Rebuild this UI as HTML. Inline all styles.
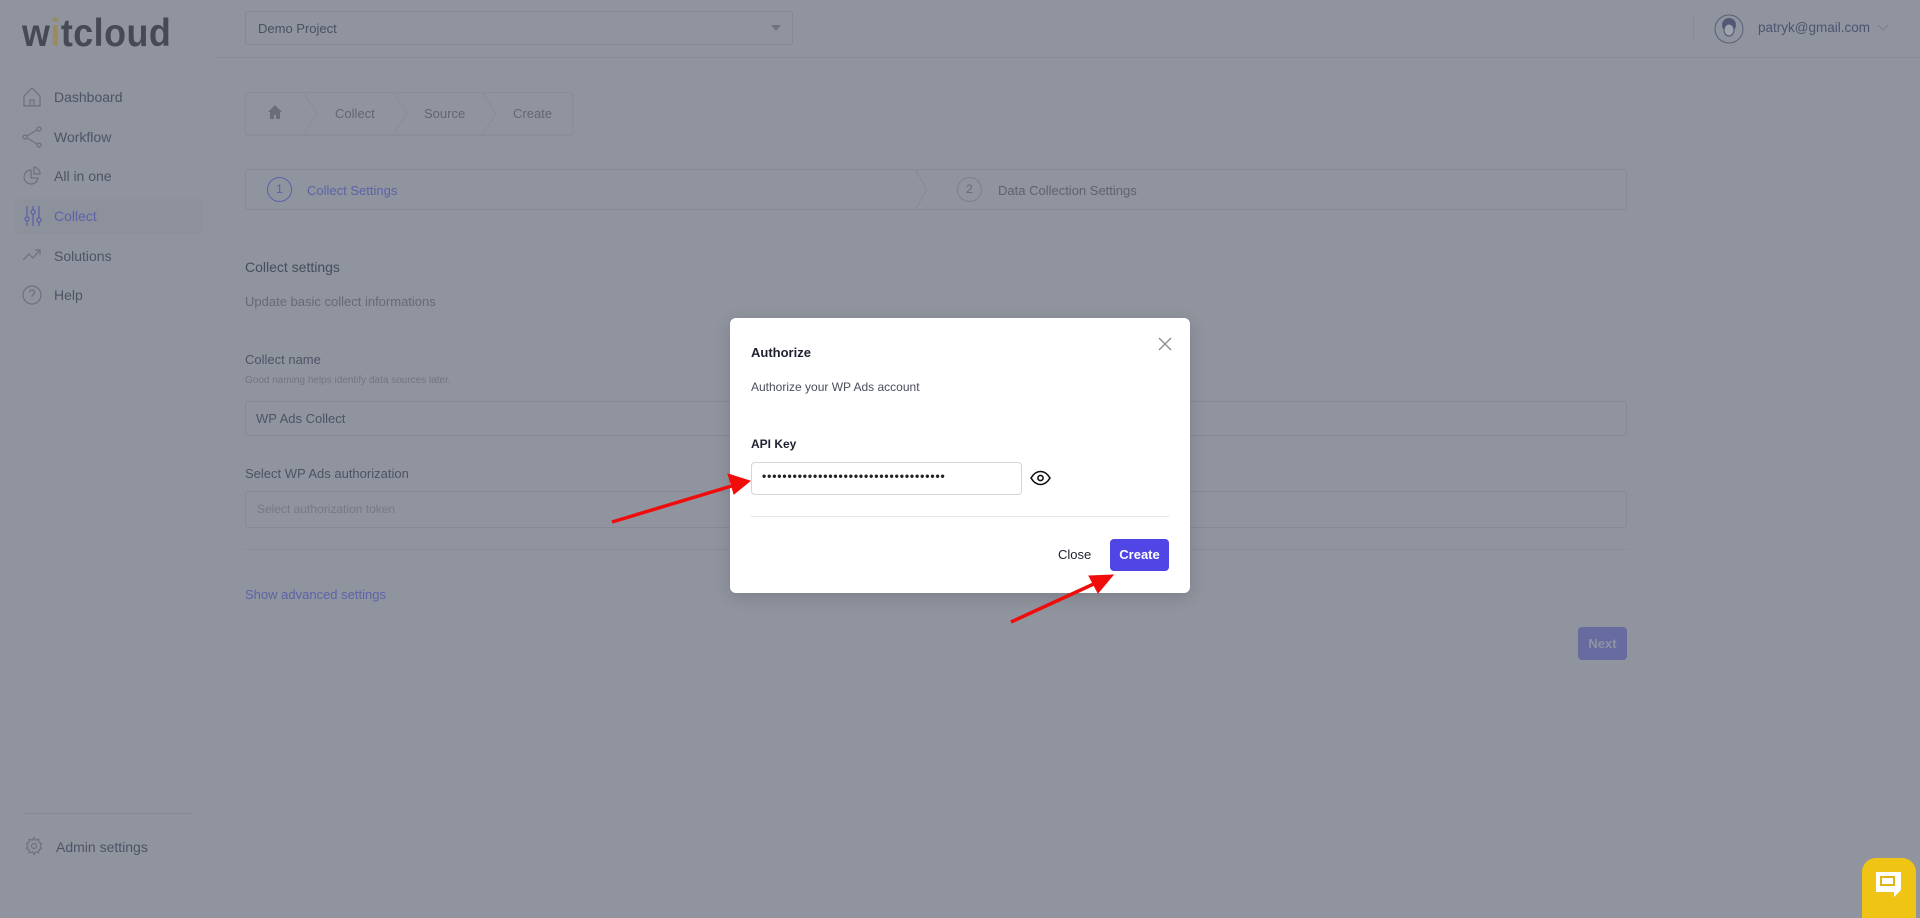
<!DOCTYPE html>
<html><head><meta charset="utf-8"><style>
*{box-sizing:border-box;margin:0;padding:0}
body{width:1920px;height:911px;overflow:hidden;background:#90949e;font-family:"Liberation Sans",sans-serif;position:relative;color:#4b5062}
.a{position:absolute}
.side{font-size:14px;color:#4e5366}
.t{white-space:nowrap}
</style></head><body>
<!-- logo -->
<div class="a t" style="left:22px;top:12px;font-size:39px;font-weight:bold;letter-spacing:0.5px;color:#464a55;transform:scaleX(0.92);transform-origin:left">w<span style="color:#9b8a5e">i</span>tcloud</div>
<!-- project select -->
<div class="a" style="left:245px;top:11px;width:548px;height:34px;border:1px solid #858995;border-radius:3px"></div>
<div class="a t" style="left:258px;top:21px;font-size:13px;color:#4b5062">Demo Project</div>
<div class="a" style="left:771px;top:25px;border-left:5px solid transparent;border-right:5px solid transparent;border-top:6px solid #6e7280"></div>
<div class="a" style="left:215px;top:57px;width:1705px;height:1px;background:#888c97"></div>
<!-- user -->
<div class="a" style="left:1693px;top:14px;width:1px;height:26px;background:#878b96"></div>
<svg class="a" style="left:1714px;top:14px" width="30" height="30" viewBox="0 0 30 30"><circle cx="15" cy="15" r="14" fill="none" stroke="#5a5f78" stroke-width="1"/><circle cx="15" cy="11" r="7" fill="#535875"/><ellipse cx="15" cy="16" rx="5" ry="6" fill="#a0a3ad" stroke="#535875"/></svg>
<div class="a t" style="left:1758px;top:20px;font-size:13.5px;color:#4e5470">patryk@gmail.com</div>
<svg class="a" style="left:1877px;top:24px" width="12" height="8"><path d="M1 1l5 5 5-5" fill="none" stroke="#7a7e8a"/></svg>
<!-- sidebar -->
<svg class="a" style="left:22px;top:86px" width="20" height="22" viewBox="0 0 20 22" fill="none" stroke="#6c7080" stroke-width="1.2"><path d="M2 10L10 2l8 8v10H2z"/><path d="M8 20v-6h4v6"/></svg>
<div class="a t side" style="left:54px;top:89px">Dashboard</div>
<svg class="a" style="left:22px;top:126px" width="20" height="22" fill="none" stroke="#6c7080" stroke-width="1.2"><circle cx="17" cy="3" r="2"/><circle cx="3" cy="11" r="2"/><circle cx="17" cy="19" r="2"/><path d="M5 10l10-6M5 12l10 6"/></svg>
<div class="a t side" style="left:54px;top:129px">Workflow</div>
<svg class="a" style="left:22px;top:165px" width="20" height="22" fill="none" stroke="#6c7080" stroke-width="1.2"><path d="M9 5a7 7 0 1 0 7 8H9z"/><path d="M12 2v7h6a7 7 0 0 0-6-7z"/></svg>
<div class="a t side" style="left:54px;top:168px">All in one</div>
<div class="a" style="left:15px;top:199px;width:187px;height:35px;background:#8d919c;border-radius:3px"></div>
<svg class="a" style="left:24px;top:205px" width="18" height="22" fill="none" stroke="#5d62a8" stroke-width="1.3"><path d="M3 1v20M9 1v20M15 1v20"/><circle cx="3" cy="14" r="2" fill="#90949e"/><circle cx="9" cy="7" r="2" fill="#90949e"/><circle cx="15" cy="15" r="2" fill="#90949e"/></svg>
<div class="a t side" style="left:54px;top:208px;color:#5d62a8">Collect</div>
<svg class="a" style="left:22px;top:245px" width="20" height="20" fill="none" stroke="#6c7080" stroke-width="1.2"><path d="M1 15l6-6 4 4 7-8M13 5h5v5"/></svg>
<div class="a t side" style="left:54px;top:248px">Solutions</div>
<svg class="a" style="left:22px;top:284px" width="20" height="22" fill="none" stroke="#6c7080" stroke-width="1.2"><circle cx="10" cy="11" r="9"/><path d="M7.5 8.5a2.5 2.5 0 1 1 3.5 2.3c-.8.4-1 1-1 2M10 15.5v.5"/></svg>
<div class="a t side" style="left:54px;top:287px">Help</div>
<div class="a" style="left:22px;top:813px;width:172px;height:1px;background:#878b96"></div>
<svg class="a" style="left:24px;top:836px" width="20" height="20" viewBox="0 0 24 24" fill="none" stroke="#6c7080" stroke-width="1.5"><circle cx="12" cy="12" r="3"/><path d="M12 2l2 3 3.5-1 .5 3.5 3 1.5-1.5 3 1.5 3-3 1.5-.5 3.5-3.5-1-2 3-2-3-3.5 1-.5-3.5-3-1.5 1.5-3-1.5-3 3-1.5.5-3.5 3.5 1z"/></svg>
<div class="a t side" style="left:56px;top:839px">Admin settings</div>
<!-- breadcrumb -->
<div class="a" style="left:245px;top:92px;width:328px;height:43px;border:1px solid #8a8e99;border-radius:4px;box-shadow:0 1px 2px rgba(0,0,0,.05)"></div>
<svg class="a" style="left:245px;top:92px" width="328" height="43" fill="none" stroke="#898d98"><path d="M58 0l14 21.5-14 21.5M148 0l14 21.5-14 21.5M237 0l14 21.5-14 21.5"/></svg>
<svg class="a" style="left:267px;top:104px" width="16" height="16"><path d="M8 1L1 8h2v7h4v-4h2v4h4V8h2z" fill="#6a6e7c"/></svg>
<div class="a t" style="left:335px;top:106px;font-size:13px;color:#626675">Collect</div>
<div class="a t" style="left:424px;top:106px;font-size:13px;color:#626675">Source</div>
<div class="a t" style="left:513px;top:106px;font-size:13px;color:#626675">Create</div>
<!-- stepper -->
<div class="a" style="left:245px;top:169px;width:1382px;height:41px;border:1px solid #868a96;border-radius:4px"></div>
<svg class="a" style="left:915px;top:169px" width="20" height="41" fill="none" stroke="#868a96"><path d="M0 0l12 20.5L0 41"/></svg>
<div class="a" style="left:267px;top:177px;width:25px;height:25px;border:1px solid #5d62a8;border-radius:50%;text-align:center;line-height:23px;font-size:12px;color:#5d62a8">1</div>
<div class="a t" style="left:307px;top:183px;font-size:13px;color:#5d62a8">Collect Settings</div>
<div class="a" style="left:957px;top:177px;width:25px;height:25px;border:1px solid #7c808c;border-radius:50%;text-align:center;line-height:23px;font-size:12px;color:#666a78">2</div>
<div class="a t" style="left:998px;top:183px;font-size:13px;color:#5e6272">Data Collection Settings</div>
<!-- form -->
<div class="a t" style="left:245px;top:259px;font-size:14px;color:#474c5d">Collect settings</div>
<div class="a t" style="left:245px;top:294px;font-size:13px;color:#666a78">Update basic collect informations</div>
<div class="a t" style="left:245px;top:352px;font-size:13px;color:#4e5366">Collect name</div>
<div class="a t" style="left:245px;top:375px;font-size:10px;color:#727684">Good naming helps identify data sources later.</div>
<div class="a" style="left:245px;top:401px;width:1382px;height:35px;border:1px solid #868a96;border-radius:3px"></div>
<div class="a t" style="left:256px;top:411px;font-size:13px;color:#4e5366">WP Ads Collect</div>
<div class="a t" style="left:245px;top:466px;font-size:13px;color:#4e5366">Select WP Ads authorization</div>
<div class="a" style="left:245px;top:491px;width:1382px;height:37px;border:1px solid #868a96;border-radius:3px"></div>
<div class="a t" style="left:257px;top:502px;font-size:12px;color:#767a88">Select authorization token</div>
<div class="a" style="left:245px;top:549px;width:1382px;height:1px;background:#888c97"></div>
<div class="a t" style="left:245px;top:587px;font-size:13px;color:#5d62a8">Show advanced settings</div>
<div class="a" style="left:1578px;top:627px;width:49px;height:33px;background:#676ba0;border-radius:4px;text-align:center;line-height:33px;font-size:13px;font-weight:bold;color:#8f93a3">Next</div>
<!-- chat -->
<div class="a" style="left:1862px;top:858px;width:54px;height:60px;background:#f0c415;border-radius:14px 14px 0 0"></div>
<svg class="a" style="left:1874px;top:870px" width="28" height="30"><path d="M2 2h25v18l-7 7v-5H2z" fill="#fff"/><rect x="7" y="7" width="13" height="8" fill="none" stroke="#e0b414" stroke-width="2"/></svg>
<!-- modal -->
<div class="a" style="left:730px;top:318px;width:460px;height:275px;background:#fff;border-radius:6px;box-shadow:0 4px 16px rgba(0,0,0,.15)"></div>
<svg class="a" style="left:1158px;top:337px" width="14" height="14" fill="none" stroke="#8a8d96" stroke-width="1.4"><path d="M1 1l12 12M13 1L1 13"/></svg>
<div class="a t" style="left:751px;top:345px;font-size:13px;font-weight:bold;color:#1e2130">Authorize</div>
<div class="a t" style="left:751px;top:380px;font-size:12px;color:#4a4e5c">Authorize your WP Ads account</div>
<div class="a t" style="left:751px;top:437px;font-size:12px;font-weight:bold;color:#1e2130">API Key</div>
<div class="a" style="left:751px;top:462px;width:271px;height:33px;border:1px solid #d4d6dc;border-radius:4px"></div>
<div class="a t" style="left:762px;top:469px;font-size:12px;font-weight:bold;letter-spacing:0.9px;color:#222">••••••••••••••••••••••••••••••••••••</div>
<svg class="a" style="left:1030px;top:470px" width="21" height="16" fill="none" stroke="#111" stroke-width="1.6"><path d="M1 8C4 3 7.5 1.5 10.5 1.5S17 3 20 8c-3 5-6.5 6.5-9.5 6.5S4 13 1 8z"/><circle cx="10.5" cy="8" r="2.6"/></svg>
<div class="a" style="left:751px;top:516px;width:418px;height:1px;background:#e3e4e8"></div>
<div class="a t" style="left:1058px;top:547px;font-size:13px;color:#1e2130">Close</div>
<div class="a" style="left:1110px;top:539px;width:59px;height:32px;background:#4f46e5;border-radius:4px;text-align:center;line-height:32px;font-size:13px;font-weight:bold;color:#fff">Create</div>
<!-- arrows -->
<svg class="a" style="left:0;top:0" width="1920" height="911"><g stroke="#f10c0c" stroke-width="3.5" fill="#f10c0c"><path d="M612 522L735 485"/><path d="M750 481l-22-7 6 20z" stroke-width="1"/><path d="M1011 622L1098 582"/><path d="M1113 575l-24 1 9 17z" stroke-width="1"/></g></svg>
</body></html>
